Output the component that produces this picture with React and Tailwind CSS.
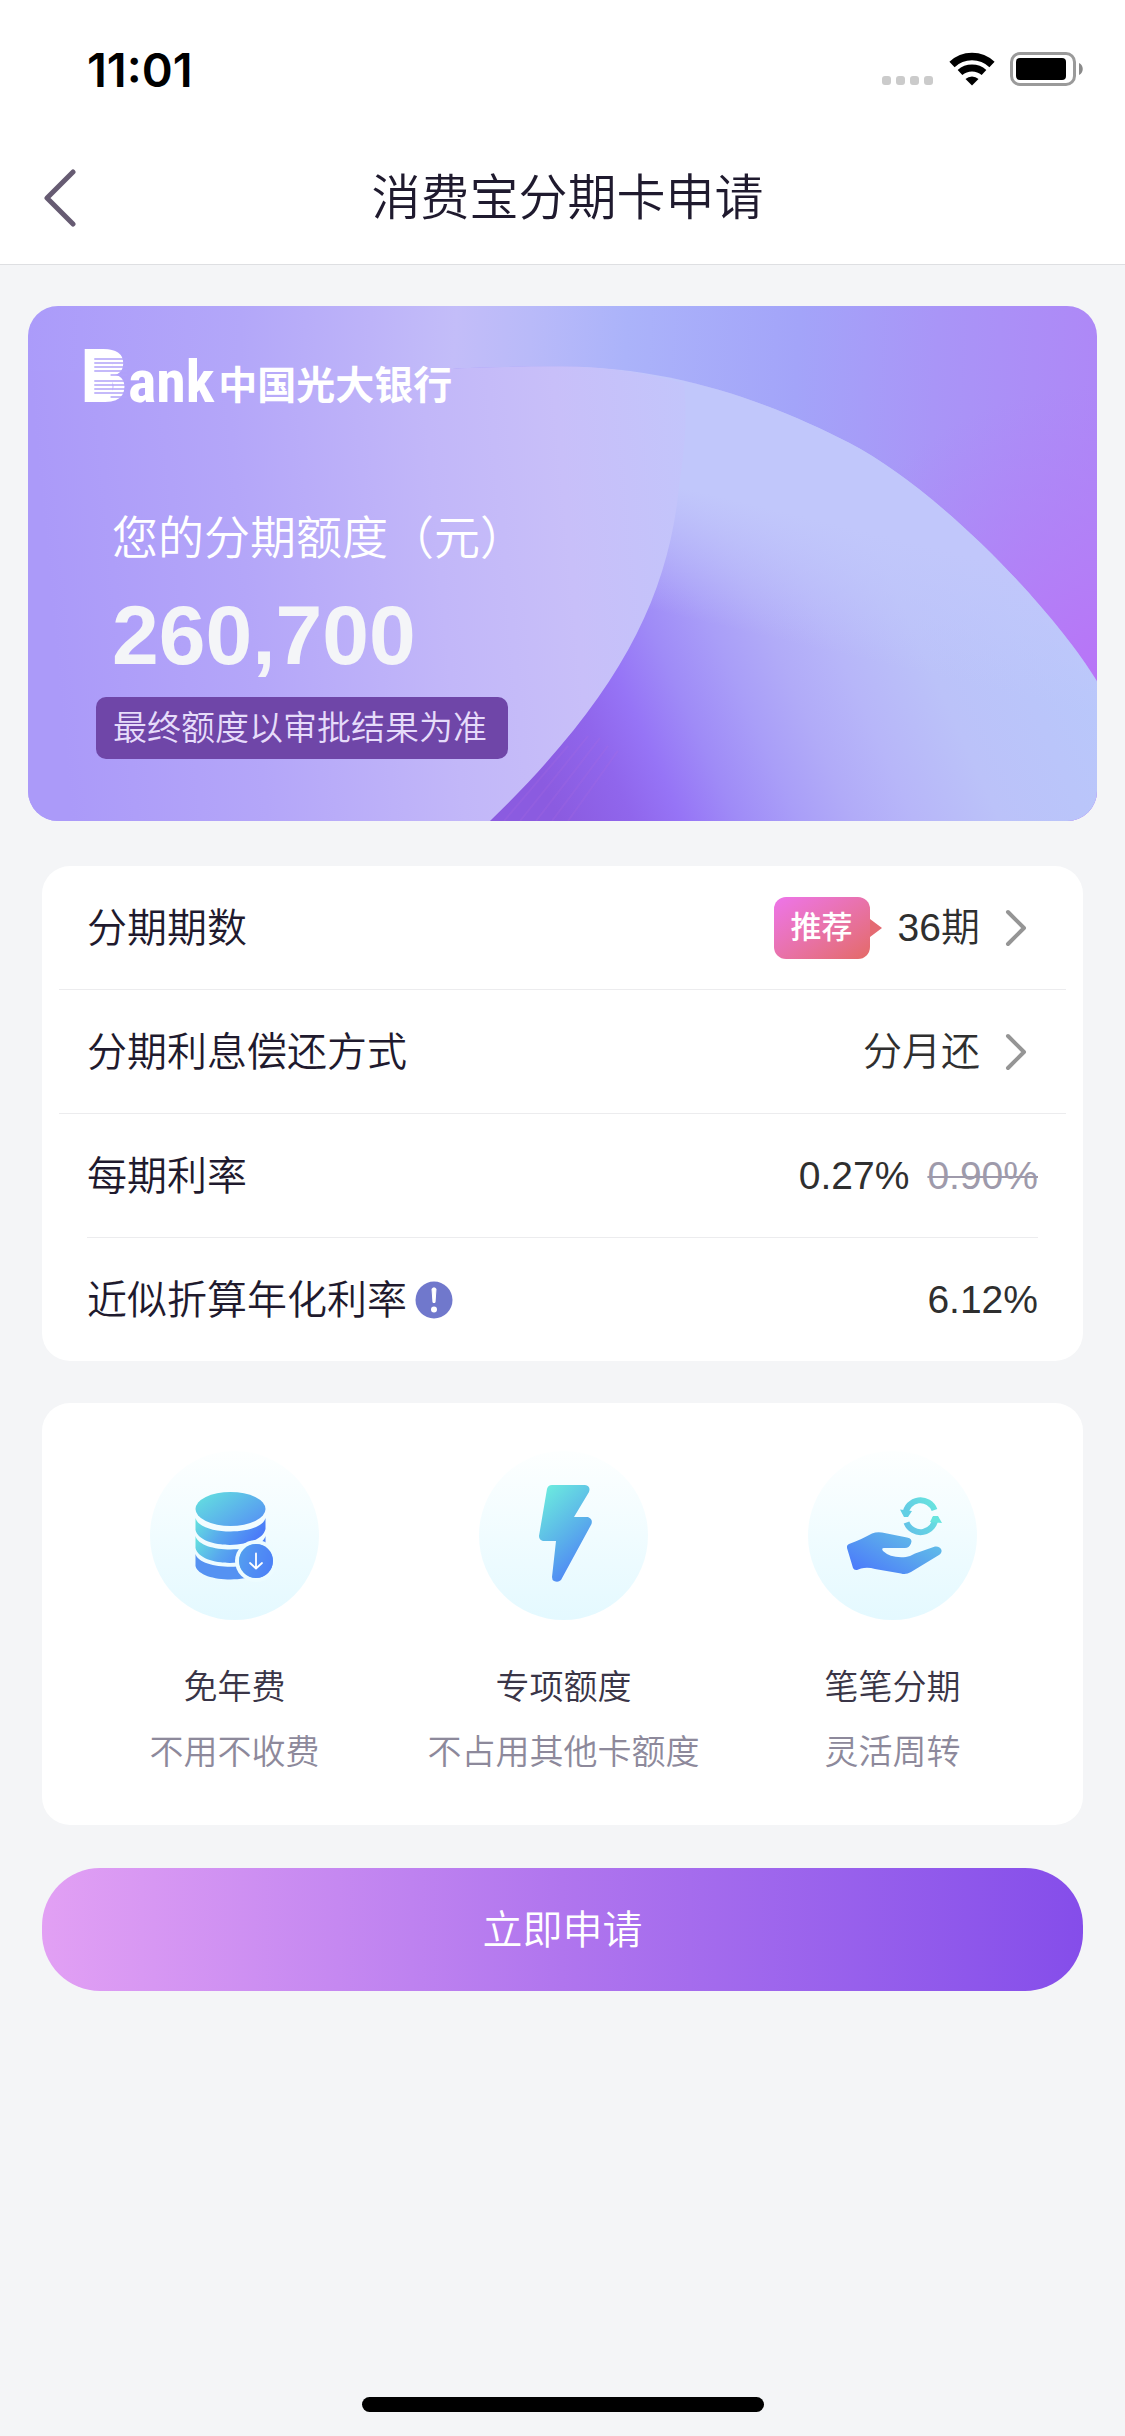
const features = [
    { key: 'free', title: '免年费', note: '不用不收费', Icon: CoinsIcon },
    { key: 'quota', title: '专项额度', note: '不占用其他卡额度', Icon: BoltIcon },
    { key: 'flex', title: '笔笔分期', note: '灵活周转', Icon: HandIcon },
]

function StatusBar() {
    return (
        <div className="flex h-[132px] items-center justify-between pr-[41px] pl-[87px] pt-[6px]">
            <span className="font-['Inter'] text-[47px] leading-none font-semibold text-black">11:01</span>
            <div className="flex items-center gap-[15px]">
                <svg className="h-[34px] w-[52px]" viewBox="0 0 52 34" fill="#cbcbcb">
                    <rect x="0" y="24" width="9" height="9" rx="3" />
                    <rect x="14" y="24" width="9" height="9" rx="3" />
                    <rect x="28" y="24" width="9" height="9" rx="3" />
                    <rect x="42" y="24" width="9" height="9" rx="3" />
                </svg>
                <svg className="h-[34px] w-[46px]" viewBox="0 0 46 34">
                    <path d="M3 12.500A29 29 0 0 1 43 12.500" fill="none" stroke="#000" strokeWidth="7.500" />
                    <path d="M11 20.500A18 18 0 0 1 35 20.500" fill="none" stroke="#000" strokeWidth="7" />
                    <path d="M23 33.500L16.500 27A9.500 9.500 0 0 1 29.500 27Z" fill="#000" />
                </svg>
                <svg className="h-[34px] w-[74px]" viewBox="0 0 74 34">
                    <rect x="1.500" y="1.500" width="63" height="31" rx="8.500" fill="none" stroke="#9a9a9a" strokeWidth="3" />
                    <rect x="6" y="6" width="50" height="22" rx="4" fill="#000" />
                    <path d="M69 11C74 13 74 21 69 23Z" fill="#8a8a8a" />
                </svg>
            </div>
        </div>
    )
}

function CardArt() {
    return (
        <svg className="absolute inset-0 h-full w-full" viewBox="0 0 1069 527" preserveAspectRatio="none" aria-hidden="true">
            <defs>
                <linearGradient id="sky" gradientUnits="userSpaceOnUse" x1="0" y1="0" x2="1069" y2="60">
                    <stop offset="0" stopColor="#ab9bfa" />
                    <stop offset=".2" stopColor="#b3a7f9" />
                    <stop offset=".32" stopColor="#bdb3f9" />
                    <stop offset=".4" stopColor="#c3bdf9" />
                    <stop offset=".47" stopColor="#b9baf9" />
                    <stop offset=".56" stopColor="#abb3fa" />
                    <stop offset=".72" stopColor="#a3a4f9" />
                    <stop offset=".85" stopColor="#a995f7" />
                    <stop offset="1" stopColor="#ae88f7" />
                </linearGradient>
                <radialGradient id="glow" gradientUnits="userSpaceOnUse" cx="1080" cy="390" r="310">
                    <stop offset="0" stopColor="#b972f7" />
                    <stop offset=".4" stopColor="#b57bf7" stopOpacity=".75" />
                    <stop offset="1" stopColor="#b080f7" stopOpacity="0" />
                </radialGradient>
                <linearGradient id="fold" gradientUnits="userSpaceOnUse" x1="520" y1="500" x2="1032" y2="274">
                    <stop offset="0" stopColor="#8b5be0" />
                    <stop offset=".12" stopColor="#9066ec" />
                    <stop offset=".2" stopColor="#9674f6" />
                    <stop offset=".29" stopColor="#9f8bf7" />
                    <stop offset=".39" stopColor="#a99ef8" />
                    <stop offset=".48" stopColor="#b1abf8" />
                    <stop offset=".58" stopColor="#b7b6f9" />
                    <stop offset=".72" stopColor="#bbc2f9" />
                    <stop offset="1" stopColor="#b9c8fb" />
                </linearGradient>
                <linearGradient id="veil" gradientUnits="userSpaceOnUse" x1="650" y1="185" x2="620" y2="310">
                    <stop offset="0" stopColor="#c1c7fb" />
                    <stop offset="1" stopColor="#c1c7fb" stopOpacity="0" />
                </linearGradient>
                <linearGradient id="leaf" gradientUnits="userSpaceOnUse" x1="0" y1="60" x2="650" y2="0">
                    <stop offset="0" stopColor="#ab9af9" />
                    <stop offset=".3" stopColor="#b4a6f9" />
                    <stop offset=".6" stopColor="#c2b7f9" />
                    <stop offset=".8" stopColor="#c8bff9" />
                    <stop offset="1" stopColor="#c3c5fb" />
                </linearGradient>
            </defs>
            <rect width="1069" height="527" fill="url(#sky)" />
            <rect width="1069" height="527" fill="url(#glow)" />
            <path d="M400 66C450 62 500 62 534 62C650 62 751 103 821 140C911 188 1024 309 1069 384V527H400Z" fill="url(#fold)" />
            <path d="M400 66C450 62 500 62 534 62C650 62 751 103 821 140C911 188 1024 309 1069 384V527H400Z" fill="url(#veil)" />
            <g stroke="#b070e0" strokeOpacity=".2" strokeWidth="2">
                <path d="M476 527L540 450M492 527L560 440M508 527L572 442M524 527L580 450M540 527L590 455" />
            </g>
            <path d="M0 66H400C450 62 500 62 534 62C580 62 620 69 656 79C660 120 656 150 651 185C640 300 590 400 462 527H0Z" fill="url(#leaf)" />
        </svg>
    )
}

function BankLogo() {
    return (
        <div className="-ml-1 flex h-[54px] items-end text-white">
            <div className="flex items-baseline leading-[54px] font-bold">
                <span className="relative font-['Roboto',sans-serif] text-[75px]">
                    B
                    <svg className="absolute inset-0 h-full w-full" viewBox="0 0 47 54" preserveAspectRatio="none">
                        <path d="M8 2H32V52H8Z" fill="#fff" />
                        <path d="M14 10H46M14 14H46M14 18H46M14 22H46M30 26H46M14 32H46M14 36H46M14 40H46M14 44H46M30 48H46" stroke="#b1a3f9" strokeWidth="1.500" />
                    </svg>
                </span>
                <span className="font-['Roboto_Condensed','Roboto',sans-serif] text-[60px]">ank</span>
            </div>
            <span className="ml-1 text-[39px] leading-[46px] font-bold">中国光大银行</span>
        </div>
    )
}

function QuotaCard() {
    return (
        <section className="relative mx-7 overflow-hidden rounded-[30px]">
            <CardArt />
            <div className="relative flex flex-col items-start pt-[49px] pb-[62px] pl-14">
                <BankLogo />
                <p className="mt-[94px] ml-7 text-[46px] leading-[70px] text-white">您的分期额度（元）</p>
                <p className="ml-7 text-[84px] leading-[124px] font-bold text-[#f4f5f8]">260,700</p>
                <p className="ml-3 rounded-[10px] bg-[#6f46a8] pr-[21px] pl-[17px] text-[34px] leading-[62px] text-[#e6dcfa]">
                    最终额度以审批结果为准
                </p>
            </div>
        </section>
    )
}

function Chevron() {
    return (
        <svg className="ml-[25px] mr-[11px] h-[38px] w-[22px]" viewBox="0 0 22 38" fill="none" stroke="#959595" strokeWidth="4" strokeLinecap="round" strokeLinejoin="round">
            <path d="M3 3L19 19L3 35" />
        </svg>
    )
}

function Terms() {
    return (
        <section className="mx-[42px] mt-[45px] rounded-[28px] bg-white text-[39px] leading-[60px] text-[#2f2f2f]">
            <button type="button" className="flex h-[123px] w-full items-center px-[45px]">
                <span className="mr-auto text-[40px] text-[#1f1a2e]">分期期数</span>
                <span className="rounded-xl bg-linear-to-br from-[#ee74ea] to-[#e46a66] px-[17px] text-[31px] leading-[62px] font-medium text-white">推荐</span>
                <svg className="mr-4 h-[18px] w-3" viewBox="0 0 12 18" fill="#e46a72">
                    <path d="M0 0L12 9L0 18Z" />
                </svg>
                <span>36期</span>
                <Chevron />
            </button>
            <hr className="mx-[17px] border-[#ececee]" />
            <button type="button" className="flex h-[123px] w-full items-center px-[45px]">
                <span className="mr-auto text-[40px] text-[#1f1a2e]">分期利息偿还方式</span>
                <span>分月还</span>
                <Chevron />
            </button>
            <hr className="mx-[17px] border-[#ececee]" />
            <div className="flex h-[123px] items-center justify-between px-[45px]">
                <span className="text-[40px] text-[#1f1a2e]">每期利率</span>
                <span>
                    0.27%<del className="ml-[18px] text-[#9e9aab] decoration-2">0.90%</del>
                </span>
            </div>
            <hr className="mx-[45px] border-[#ececee]" />
            <div className="flex h-[123px] items-center px-[45px]">
                <span className="text-[40px] text-[#1f1a2e]">近似折算年化利率</span>
                <button type="button" aria-label="利率说明" className="ml-2">
                    <svg className="h-[38px] w-[38px]" viewBox="0 0 38 38">
                        <circle cx="19" cy="19" r="18.500" fill="#7078cc" />
                        <path d="M17 8C17 6.500 21 6.500 21 8L20 21.500H18Z" fill="#fff" stroke="#fff" strokeLinejoin="round" />
                        <circle cx="19" cy="28.500" r="3" fill="#fff" />
                    </svg>
                </button>
                <span className="ml-auto">6.12%</span>
            </div>
        </section>
    )
}

function CoinsIcon() {
    return (
        <svg className="h-full w-full" viewBox="0 0 169 169">
            <defs>
                <linearGradient id="coin" x1="0" y1="0" x2="1" y2=".7">
                    <stop offset="0" stopColor="#64e4de" />
                    <stop offset="1" stopColor="#5798f2" />
                </linearGradient>
                <linearGradient id="coinDeep" x1="0" y1="0" x2="1" y2=".3">
                    <stop offset="0" stopColor="#64e4de" />
                    <stop offset=".5" stopColor="#58a8ee" />
                    <stop offset="1" stopColor="#4b7cf8" />
                </linearGradient>
            </defs>
            <ellipse cx="80.500" cy="58" rx="35" ry="17" fill="url(#coin)" />
            <path d="M45.500 67C50 85 111 85 115.500 67V78C111 99 50 99 45.500 79Z" fill="url(#coinDeep)" />
            <path d="M45.500 85C50 103 111 103 115.500 85V96C111 117 50 117 45.500 97Z" fill="url(#coinDeep)" />
            <path d="M45.500 103C50 120 111 120 115.500 103V115C111 133 50 133 45.500 115Z" fill="#5592f2" />
            <circle cx="106" cy="110" r="21" fill="#edfcff" />
            <circle cx="106" cy="110" r="17" fill="url(#coinDeep)" />
            <circle cx="106" cy="110" r="17" fill="#4f86f5" fillOpacity=".7" />
            <path d="M106 102.500V117M100 112L106 117.500L112 112" fill="none" stroke="#fff" strokeWidth="1.800" strokeLinecap="round" strokeLinejoin="round" />
        </svg>
    )
}

function BoltIcon() {
    return (
        <svg className="h-full w-full" viewBox="0 0 169 169">
            <defs>
                <linearGradient id="bolt" x1=".2" y1="0" x2=".7" y2="1">
                    <stop offset="0" stopColor="#6be9df" />
                    <stop offset=".55" stopColor="#5ab0ea" />
                    <stop offset="1" stopColor="#4d7ef8" />
                </linearGradient>
            </defs>
            <path
                d="M73 34H106Q112 35 110 41L95 66H109Q114 68 112.500 73L82 129Q79 132 75 130Q73 129 73 126L77 90H64Q60 89 60 85L68 38Q69 34 73 34Z"
                fill="url(#bolt)"
            />
        </svg>
    )
}

function HandIcon() {
    return (
        <svg className="h-full w-full" viewBox="0 0 169 169">
            <defs>
                <linearGradient id="hand" x1="0" y1=".8" x2="1" y2="0">
                    <stop offset="0" stopColor="#4b7afb" />
                    <stop offset=".5" stopColor="#59a3ee" />
                    <stop offset="1" stopColor="#63c9e6" />
                </linearGradient>
                <linearGradient id="cycle" gradientUnits="userSpaceOnUse" x1="95" y1="80" x2="132" y2="55">
                    <stop offset="0" stopColor="#62bfe8" />
                    <stop offset="1" stopColor="#68e6de" />
                </linearGradient>
            </defs>
            <path
                d="M41 93C50 90 57 86 64 82.500Q69 80.500 74 81.500L99 86.500Q105 87.500 103 92.500Q101 97 97 97H76Q73 97 75 100Q83 107.500 98 106Q103 105 107 102.500L127 95.500Q132 95 133.500 99Q134 102 131 104L103 121Q98 124 93 122.500L67 118Q60 116 53 117.500L49 119Q46 119.500 45 117L39 97Q38.500 94 41 93Z"
                fill="url(#hand)"
            />
            <g fill="none" stroke="url(#cycle)" strokeWidth="6">
                <path d="M97.500 63A15 15 0 0 1 126.500 59" />
                <path d="M98.500 71.500A15 15 0 0 0 127.500 66" />
            </g>
            <path d="M92 58.500L104 60L100 66H96Z" fill="#62cfe4" />
            <path d="M125 65H130L134 72L122 71Z" fill="#68e4de" />
        </svg>
    )
}

function Features() {
    return (
        <section className="mx-[42px] mt-[42px] grid grid-cols-3 rounded-[28px] bg-white pt-12 pr-[26px] pb-10 pl-7 text-center text-[34px] leading-[65px]">
            {features.map(({ key, title, note, Icon }) => (
                <div key={key} className="flex flex-col items-center whitespace-nowrap">
                    <div className="mb-[35px] h-[169px] w-[169px] rounded-full bg-linear-to-b from-[#fdffff] to-[#e4f9ff]">
                        <Icon />
                    </div>
                    <h2 className="font-[350] text-[#3a3547]">{title}</h2>
                    <p className="text-[#8d899b]">{note}</p>
                </div>
            ))}
        </section>
    )
}

export default function App() {
    return (
        <div className="flex min-h-screen flex-col bg-[#f4f5f7] font-['Liberation_Sans','Noto_Sans_CJK_SC',sans-serif] font-[350]">
            <header className="border-b border-[#dedfe2] bg-white">
                <StatusBar />
                <div className="grid h-[132px] grid-cols-[120px_1fr_110px] items-center">
                    <button type="button" aria-label="返回" className="justify-self-start pl-[42px]">
                        <svg className="h-[58px] w-[36px]" viewBox="0 0 36 58" fill="none" stroke="#665b72" strokeWidth="5" strokeLinecap="round" strokeLinejoin="round">
                            <path d="M31 3L5 29L31 55" />
                        </svg>
                    </button>
                    <h1 className="text-center text-[49px] leading-[72px] font-[350] text-[#1f1a2e]">消费宝分期卡申请</h1>
                </div>
            </header>
            <main className="flex flex-col pt-[41px]">
                <QuotaCard />
                <Terms />
                <Features />
                <button
                    type="button"
                    className="mx-[42px] mt-[43px] h-[123px] rounded-[58px] bg-linear-to-r from-[#e2a0f4] via-[#b075ee] to-[#854dea] text-[40px] text-white"
                >
                    立即申请
                </button>
            </main>
            <div className="mx-auto mt-auto mb-6 h-[15px] w-[402px] rounded-full bg-black" />
        </div>
    )
}
